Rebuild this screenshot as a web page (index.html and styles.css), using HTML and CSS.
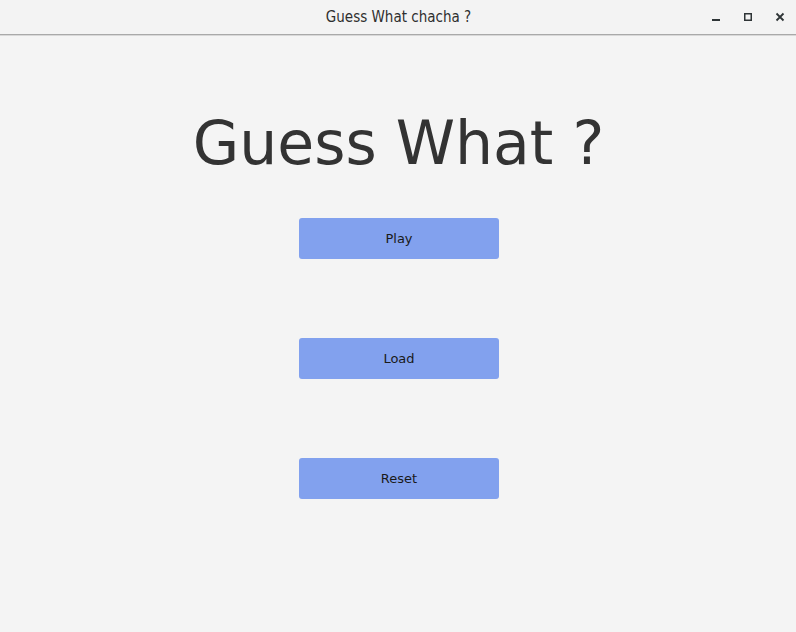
FILE: index.html
```html
<!DOCTYPE html>
<html>
<head>
<meta charset="utf-8">
<link rel="stylesheet" href="styles.css">
</head>
<body>
<div class="window">
  <header class="titlebar">
    <div class="title">Guess What chacha ?</div>
    <div class="controls">
      <span class="ctl"><svg width="10" height="10" viewBox="0 0 10 10"><rect x="1" y="7" width="8" height="2" fill="#2e3436"/></svg></span>
      <span class="ctl"><svg width="10" height="10" viewBox="0 0 10 10"><rect x="1.75" y="1.75" width="6.5" height="6.5" fill="none" stroke="#2e3436" stroke-width="1.5"/></svg></span>
      <span class="ctl"><svg width="10" height="10" viewBox="0 0 10 10"><path d="M1.5 1.5 L8.5 8.5 M8.5 1.5 L1.5 8.5" stroke="#2e3436" stroke-width="1.8"/></svg></span>
    </div>
  </header>
  <main class="content">
    <h1 class="heading">Guess What ?</h1>
    <div class="buttons">
      <button class="btn">Play</button>
      <button class="btn">Load</button>
      <button class="btn">Reset</button>
    </div>
  </main>
</div>
</body>
</html>
```
FILE: styles.css
```css
html, body {
  margin: 0;
  padding: 0;
  background: #f3f3f3;
}
.window {
  width: 796px;
  height: 632px;
  display: flex;
  flex-direction: column;
  background: #f4f4f4;
}
.titlebar {
  height: 34px;
  flex: none;
  display: flex;
  align-items: center;
  justify-content: center;
  background: #f3f3f3;
  border-bottom: 1px solid #a9a9a9;
  box-shadow: 0 1px 0 #d8d8d8;
  position: relative;
}
.title {
  font-family: "DejaVu Sans Condensed", "DejaVu Sans", sans-serif;
  font-stretch: condensed;
  font-size: 15px;
  color: #2e2e2e;
  margin-left: 1px;
}
.controls {
  position: absolute;
  right: 11px;
  top: 12px;
  display: flex;
  gap: 22px;
}
.ctl {
  width: 10px;
  height: 10px;
  display: block;
}
.ctl svg { display: block; }
.content {
  flex: 1;
  display: flex;
  flex-direction: column;
  align-items: center;
  padding-top: 73px;
}
.heading {
  margin: 0;
  font-family: "DejaVu Sans", sans-serif;
  font-weight: normal;
  font-size: 60px;
  line-height: 70px;
  color: #333333;
  margin-left: 1px;
}
.buttons {
  margin-top: 40px;
  margin-left: 2px;
  display: flex;
  flex-direction: column;
  gap: 79px;
}
.btn {
  width: 200px;
  height: 41px;
  border: none;
  border-radius: 3px;
  background: #82a1ee;
  font-family: "DejaVu Sans", sans-serif;
  font-size: 13px;
  color: #1a1a1a;
  padding: 0;
}
```
